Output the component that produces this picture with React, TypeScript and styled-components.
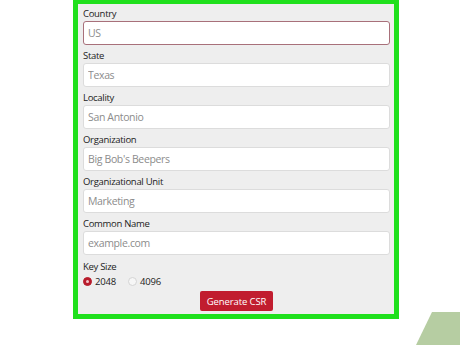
import React from "react";
import styled, { createGlobalStyle } from "styled-components";

const GlobalStyle = createGlobalStyle`
  html, body {
    margin: 0;
    padding: 0;
    background: #ffffff;
  }
  body {
    width: 460px;
    height: 345px;
    overflow: hidden;
    position: relative;
    font-family: "Open Sans", "Noto Sans", sans-serif;
  }
`;

const Frame = styled.div`
  box-sizing: border-box;
  margin-left: 73px;
  width: 326px;
  height: 319px;
  border: 5px solid #1fe01c;
  border-top-width: 4px;
  background: #eeeeee;
  padding: 3px 4px 0 5px;
`;

const Form = styled.form`
  display: flex;
  flex-direction: column;
`;

const Field = styled.div`
  display: flex;
  flex-direction: column;
  margin-bottom: 4px;
`;

const Label = styled.label<{ $gap?: number }>`
  font-size: 9.5px;
  line-height: 13px;
  color: #222;
  margin-top: ${(p) => p.$gap ?? 0}px;
  margin-bottom: 1px;
  letter-spacing: -0.3px;
`;

const Input = styled.input<{ $focused?: boolean }>`
  box-sizing: border-box;
  width: 100%;
  height: 24px;
  border: 1px solid ${(p) => (p.$focused ? "#a8707a" : "#dcdcdc")};
  border-radius: 3px;
  background: #fff;
  padding: 0 4px;
  font-family: inherit;
  font-size: 10.5px;
  letter-spacing: -0.35px;
  outline: none;
  &::placeholder {
    color: #8c8c8c;
  }
`;

const RadioRow = styled.div`
  display: flex;
  align-items: center;
  gap: 12px;
  height: 14px;
`;

const RadioOption = styled.span`
  display: flex;
  align-items: center;
  gap: 3px;
  font-size: 9.5px;
  letter-spacing: -0.2px;
  color: #222;
`;

const Dot = styled.span<{ $checked?: boolean }>`
  box-sizing: border-box;
  width: 9px;
  height: 9px;
  border-radius: 50%;
  border: 1px solid ${(p) => (p.$checked ? "#b81c2c" : "#d4d4d4")};
  background: ${(p) => (p.$checked ? "#b81c2c" : "#f6f6f6")};
  display: flex;
  align-items: center;
  justify-content: center;
  &::after {
    content: "";
    width: 3px;
    height: 3px;
    border-radius: 50%;
    background: ${(p) => (p.$checked ? "#f3c4c8" : "transparent")};
  }
`;

const ButtonRow = styled.div`
  display: flex;
  justify-content: center;
  margin-top: 3px;
`;

const Button = styled.button`
  width: 73px;
  height: 20px;
  border: none;
  border-radius: 2px;
  background: #c11d2f;
  color: #fff;
  font-family: inherit;
  font-size: 9.5px;
  letter-spacing: -0.1px;
  padding: 0;
`;

const Corner = styled.svg`
  position: absolute;
  right: 0;
  bottom: 0;
`;

const fields = [
  { label: "Country", placeholder: "US", focused: true },
  { label: "State", placeholder: "Texas" },
  { label: "Locality", placeholder: "San Antonio" },
  { label: "Organization", placeholder: "Big Bob's Beepers" },
  { label: "Organizational Unit", placeholder: "Marketing" },
  { label: "Common Name", placeholder: "example.com" },
];

export default function App() {
  return (
    <>
      <GlobalStyle />
      <Frame>
        <Form onSubmit={(e) => e.preventDefault()}>
          {fields.map((f) => (
            <Field key={f.label}>
              <Label>{f.label}</Label>
              <Input placeholder={f.placeholder} $focused={f.focused} />
            </Field>
          ))}
          <Label $gap={1}>Key Size</Label>
          <RadioRow>
            <RadioOption>
              <Dot $checked />
              2048
            </RadioOption>
            <RadioOption>
              <Dot />
              4096
            </RadioOption>
          </RadioRow>
          <ButtonRow>
            <Button type="submit">Generate CSR</Button>
          </ButtonRow>
        </Form>
      </Frame>
      <Corner width="44" height="33" viewBox="0 0 44 33">
        <polygon points="0,33 16,0 44,0 44,33" fill="#b6cda2" />
      </Corner>
    </>
  );
}
